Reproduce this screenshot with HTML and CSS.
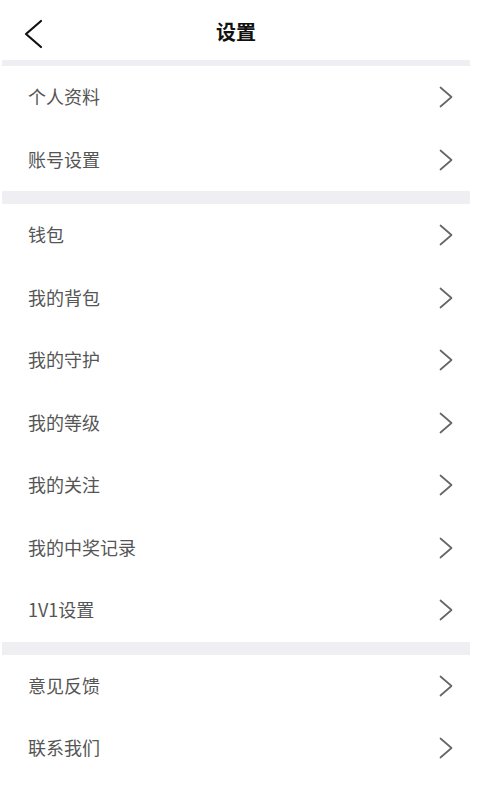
FILE: index.html
```html
<!DOCTYPE html>
<html lang="zh-CN">
<head>
    <meta charset="UTF-8">
    <meta name="viewport" content="width=device-width, initial-scale=1.0">
    <title>设置</title>
    <link rel="stylesheet" href="styles.css">
</head>
<body>
    <div class="page">
        <div class="header">
            <svg class="back" width="20" height="30" viewBox="0 0 20 30">
                <polyline points="18,2 3,15 18,28" fill="none" stroke="#111" stroke-width="2.2" stroke-linecap="round" stroke-linejoin="round"/>
            </svg>
            <h1>设置</h1>
        </div>

        <div class="gap small"></div>
        <div class="row"><span>个人资料</span><svg class="arrow" viewBox="0 0 14 22"><polyline points="1.5,1.5 12.5,11 1.5,20.5"/></svg></div>
        <div class="row"><span>账号设置</span><svg class="arrow" viewBox="0 0 14 22"><polyline points="1.5,1.5 12.5,11 1.5,20.5"/></svg></div>

        <div class="gap"></div>
        <div class="row"><span>钱包</span><svg class="arrow" viewBox="0 0 14 22"><polyline points="1.5,1.5 12.5,11 1.5,20.5"/></svg></div>
        <div class="row"><span>我的背包</span><svg class="arrow" viewBox="0 0 14 22"><polyline points="1.5,1.5 12.5,11 1.5,20.5"/></svg></div>
        <div class="row"><span>我的守护</span><svg class="arrow" viewBox="0 0 14 22"><polyline points="1.5,1.5 12.5,11 1.5,20.5"/></svg></div>
        <div class="row"><span>我的等级</span><svg class="arrow" viewBox="0 0 14 22"><polyline points="1.5,1.5 12.5,11 1.5,20.5"/></svg></div>
        <div class="row"><span>我的关注</span><svg class="arrow" viewBox="0 0 14 22"><polyline points="1.5,1.5 12.5,11 1.5,20.5"/></svg></div>
        <div class="row"><span>我的中奖记录</span><svg class="arrow" viewBox="0 0 14 22"><polyline points="1.5,1.5 12.5,11 1.5,20.5"/></svg></div>
        <div class="row"><span>1V1设置</span><svg class="arrow" viewBox="0 0 14 22"><polyline points="1.5,1.5 12.5,11 1.5,20.5"/></svg></div>

        <div class="gap"></div>
        <div class="row"><span>意见反馈</span><svg class="arrow" viewBox="0 0 14 22"><polyline points="1.5,1.5 12.5,11 1.5,20.5"/></svg></div>
        <div class="row"><span>联系我们</span><svg class="arrow" viewBox="0 0 14 22"><polyline points="1.5,1.5 12.5,11 1.5,20.5"/></svg></div>
    </div>
</body>
</html>
```

FILE: styles.css
```css
body {
    margin: 0;
    background: #ffffff;
    font-family: 'Noto Sans CJK SC', 'Noto Sans', sans-serif;
}

.page {
    width: 468px;
    margin-left: 2px;
}

.header {
    height: 60px;
    display: flex;
    align-items: center;
    justify-content: center;
    position: relative;
}

.header h1 {
    margin: 4px 0 0;
    font-size: 20px;
    font-weight: bold;
    line-height: 1;
    color: #111;
}

.back {
    position: absolute;
    left: 21px;
    top: 19px;
}

.gap {
    height: 13px;
    background: #efeff3;
}

.gap.small {
    height: 6px;
}

.row {
    height: 62.5px;
    display: flex;
    align-items: center;
    justify-content: space-between;
    padding: 0 17px 0 26px;
    font-size: 18px;
    line-height: 1;
    color: #555;
}

.row span {
    margin-top: -2px;
}

.arrow {
    width: 14px;
    height: 22px;
    fill: none;
    stroke: #666;
    stroke-width: 1.7;
    stroke-linecap: round;
    stroke-linejoin: round;
}
```
